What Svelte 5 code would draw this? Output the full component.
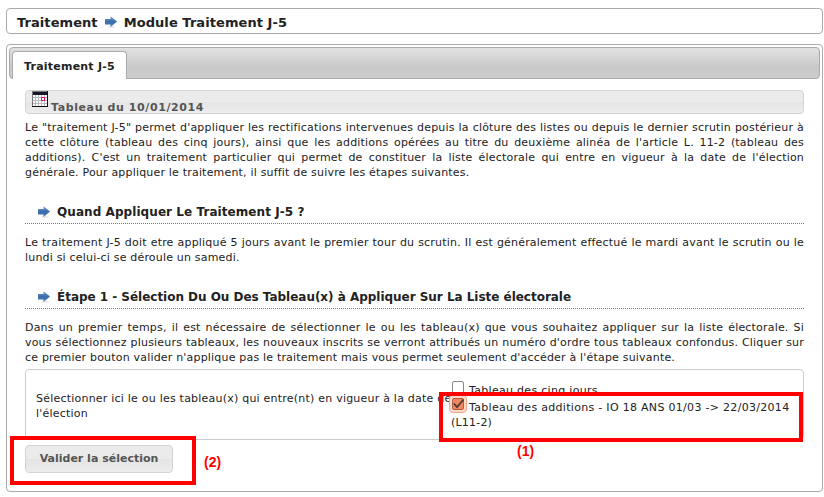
<script>
  const intro = [
    `Le "traitement J-5" permet d'appliquer les rectifications intervenues depuis la clôture des listes ou depuis le dernier scrutin postérieur à`,
    `cette clôture (tableau des cinq jours), ainsi que les additions opérées au titre du deuxième alinéa de l'article L. 11-2 (tableau des`,
    `additions). C'est un traitement particulier qui permet de constituer la liste électorale qui entre en vigueur à la date de l'élection`,
    `générale. Pour appliquer le traitement, il suffit de suivre les étapes suivantes.`
  ];
  const when = [
    `Le traitement J-5 doit etre appliqué 5 jours avant le premier tour du scrutin. Il est généralement effectué le mardi avant le scrutin ou le`,
    `lundi si celui-ci se déroule un samedi.`
  ];
  const step = [
    `Dans un premier temps, il est nécessaire de sélectionner le ou les tableau(x) que vous souhaitez appliquer sur la liste électorale. Si`,
    `vous sélectionnez plusieurs tableaux, les nouveaux inscrits se verront attribués un numéro d'ordre tous tableaux confondus. Cliquer sur`,
    `ce premier bouton valider n'applique pas le traitement mais vous permet seulement d'accéder à l'étape suivante.`
  ];
</script>

{#snippet arrow()}
  <svg class="arrow" width="12" height="12" viewBox="0 0 12 12">
    <defs>
      <linearGradient id="blue" x1="0" y1="0" x2="0" y2="1">
        <stop offset="0" stop-color="#7ba3d3" />
        <stop offset=".5" stop-color="#3a6cab" />
        <stop offset="1" stop-color="#4a7ab8" />
      </linearGradient>
    </defs>
    <ellipse cx="7" cy="11" rx="4" ry=".8" fill="#e4e4e4" />
    <path d="M0 3H5.5V.2L12 5.6L5.5 11V8.5H0Z" fill="url(#blue)" />
  </svg>
{/snippet}

{#snippet paragraph(lines)}
  <p>
    {#each lines as line, i}
      <span class="line" class:last={i === lines.length - 1}>{line}</span>
    {/each}
  </p>
{/snippet}

<div class="page">
  <header>
    <span>Traitement</span>{@render arrow()}<span>Module Traitement J-5</span>
  </header>

  <main>
    <nav><div class="tab">Traitement J-5</div></nav>
    <section>
      <div class="bar">
        <svg width="16" height="16" viewBox="0 0 16 16" shape-rendering="crispEdges">
          <rect width="16" height="16" fill="#111" />
          <rect y="4" width="15" height="11" fill="#bbb" />
          <rect y="1" width="15" height="3" fill="#15152b" />
          <path d="M0 0H15V1H0ZM0 1H1V15H0Z" fill="#777" />
          <path d="M1 4h2v2h-2zM4 4h2v2h-2zM7 4h2v2h-2zM10 4h2v2h-2zM13 4h2v2h-2zM1 7h2v2h-2zM4 7h2v2h-2zM7 7h2v2h-2zM13 7h2v2h-2zM1 10h2v2h-2zM4 10h2v2h-2zM7 10h2v2h-2zM10 10h2v2h-2zM13 10h2v2h-2zM1 13h2v2h-2zM4 13h2v2h-2zM7 13h2v2h-2zM10 13h2v2h-2zM13 13h2v2h-2z" fill="#fff" />
          <rect x="9.5" y="6.5" width="3" height="3" fill="#fff" stroke="#e5166e" />
        </svg>
        <span>Tableau du 10/01/2014</span>
      </div>
      {@render paragraph(intro)}
      <h2>{@render arrow()}<span class="question">Quand Appliquer Le Traitement J-5 ?</span></h2>
      {@render paragraph(when)}
      <h2>{@render arrow()}<span class="stage">Étape 1 - Sélection Du Ou Des Tableau(x) à Appliquer Sur La Liste électorale</span></h2>
      {@render paragraph(step)}
      <form>
        <div class="label"><span>Sélectionner ici le ou les tableau(x) qui entre(nt) en vigueur à la date de</span><br />l'élection</div>
        <div class="choices">
          <div class="choice first"><i class="box"></i><span>Tableau des cinq jours</span></div>
          <div class="choice second">
            <svg width="18" height="18" viewBox="0 0 18 18">
              <rect x=".5" y=".5" width="17" height="17" rx="3.5" fill="#fbd9cb" stroke="#f3a78a" />
              <rect x="3.5" y="3.5" width="11" height="11" rx="1.5" fill="#f08763" stroke="#b9583a" />
              <path d="M5 8.5L8 12L14.5 4.5" fill="none" stroke="#4b3a34" stroke-width="1.8" />
            </svg>
            <span>Tableau des additions - IO 18 ANS 01/03 -&gt; 22/03/2014</span>
          </div>
          <div class="wrap">(L11-2)</div>
        </div>
      </form>
      <button>Valider la sélection</button>
    </section>
  </main>

  <div class="mark one"></div>
  <div class="mark two"></div>
  <b class="note n1">(1)</b>
  <b class="note n2">(2)</b>
</div>

<style>
  :global(body) { background: #fff; }
  .page, .page * { box-sizing: border-box; }
  .page {
    position: relative;
    width: 824px;
    height: 497px;
    overflow: hidden;
    padding: 8px 1px 0 6px;
    font: 11px/15px "DejaVu Sans", sans-serif;
    color: #222;
  }
  header {
    display: flex;
    align-items: center;
    height: 26px;
    padding-left: 10px;
    border: 1px solid #aaa;
    border-radius: 4px;
    font-size: 13px;
    font-weight: bold;
    letter-spacing: .07px;
    white-space: nowrap;
  }
  header span { padding-top: 2px; }
  header .arrow { margin: 2px 7px 0; }
  .arrow { flex: none; display: block; }
  main {
    height: 448px;
    margin-top: 10px;
    padding: 2px;
    border: 1px solid #aaa;
    border-radius: 4px;
  }
  nav {
    display: flex;
    align-items: flex-end;
    height: 32px;
    padding-left: 2px;
    border: 1px solid #aaa;
    border-radius: 4px;
    background: linear-gradient(#e2e2e2, #c9c9c9 65%, #cdcdcd);
  }
  .tab {
    width: 115px;
    height: 28px;
    margin-bottom: -1px;
    padding: 7px 0 0 11px;
    border: 1px solid #aaa;
    border-bottom: 0;
    border-radius: 4px 4px 0 0;
    background: #fff;
    font-weight: bold;
    letter-spacing: .22px;
    white-space: nowrap;
  }
  section { width: 779px; margin: 11px 0 0 16px; }
  .bar {
    display: flex;
    height: 24px;
    padding-left: 6px;
    border: 1px solid #d3d3d3;
    border-radius: 4px;
    background: linear-gradient(#ebebeb 0 50%, #e4e4e4 50%, #ededed);
    color: #555;
    font-weight: bold;
  }
  .bar span { margin: 9px 0 0 3px; letter-spacing: .6px; }
  p { margin: 6px 0 0; letter-spacing: .19px; }
  .line { display: block; height: 15px; white-space: nowrap; text-align-last: justify; }
  .line.last { text-align-last: left; }
  h2 {
    display: flex;
    align-items: center;
    height: 24px;
    margin: 20px 0 0;
    padding-left: 13px;
    border-bottom: 1px dotted #777;
    font-size: 12px;
    white-space: nowrap;
  }
  h2 span { padding-top: 2px; }
  .question { letter-spacing: .07px; }
  .stage { letter-spacing: -.025px; }
  h2 .arrow { margin-right: 7px; }
  h2 + p { margin-top: 11px; }
  form {
    display: flex;
    height: 71px;
    margin-top: 4px;
    border: 1px solid #ccc;
    border-radius: 4px;
    white-space: nowrap;
  }
  .label { width: 423px; padding: 21px 0 0 10px; letter-spacing: .22px; }
  .choices { padding-top: 10px; }
  .choice { display: flex; height: 15px; letter-spacing: .3px; }
  .box { width: 12px; height: 13px; margin: 1px 5px 0 3px; border: 1px solid #888; border-radius: 2px; }
  .choice span { margin-top: 3px; }
  .choice svg { flex: none; margin-right: 2px; position: relative; }
  .second { height: 20px; }
  .second span { margin-top: 5px; }
  .wrap { padding-left: 2px; letter-spacing: .2px; }
  button {
    display: block;
    width: 148px;
    height: 28px;
    margin: 5px 0 0;
    padding: 0 0 1px;
    border: 1px solid #d3d3d3;
    border-radius: 4px;
    background: linear-gradient(#ebebeb 0 50%, #e4e4e4 50%, #ededed);
    color: #555;
    font: bold 11px "DejaVu Sans", sans-serif;
    white-space: nowrap;
  }
  .mark { position: absolute; border: 4px solid #f00; }
  .one { left: 439px; top: 392px; width: 364px; height: 50px; }
  .two { left: 10px; top: 436px; width: 186px; height: 49px; }
  .note { position: absolute; color: #f00; font: bold 14px/16px "Liberation Sans", sans-serif; }
  .n1 { left: 517px; top: 443px; }
  .n2 { left: 204px; top: 454px; }
</style>
